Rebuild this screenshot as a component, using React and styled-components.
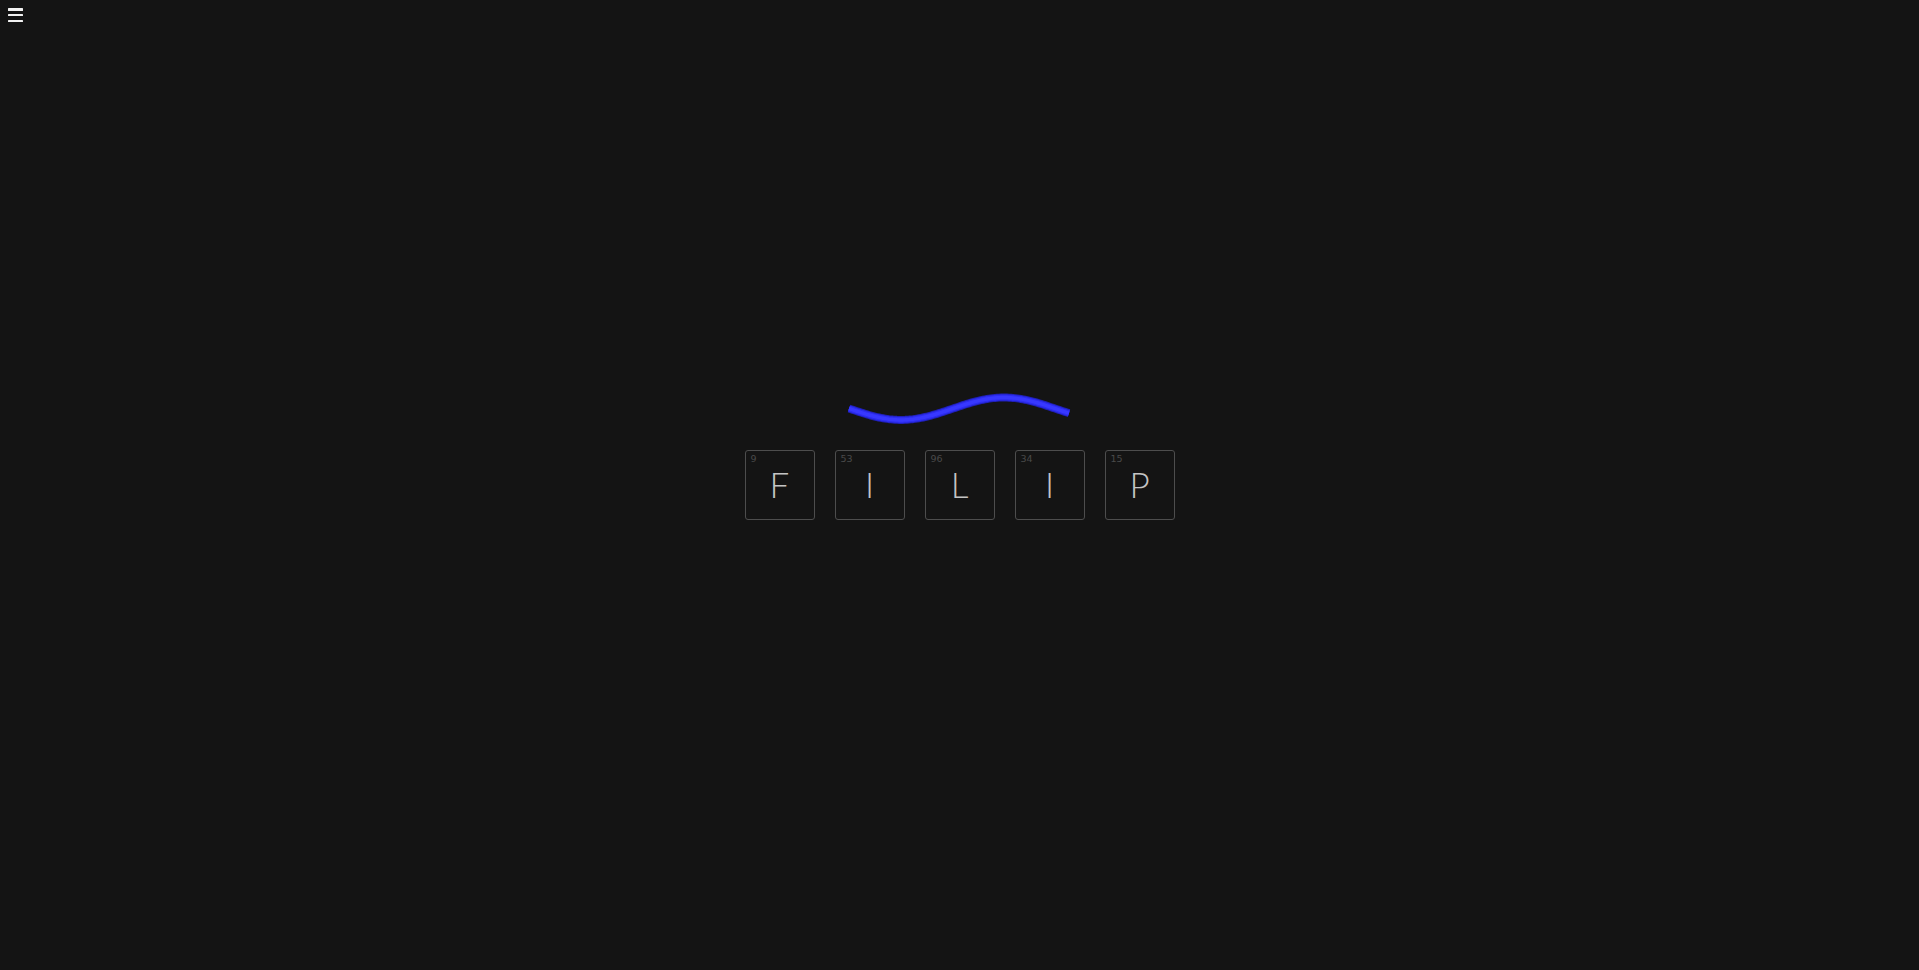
import React from 'react';
import styled, { createGlobalStyle } from 'styled-components';

const GlobalStyle = createGlobalStyle`
  html, body {
    margin: 0;
    padding: 0;
    background: #141414;
    height: 100%;
  }
  body {
    font-family: "Lato", "Open Sans", "Liberation Sans", sans-serif;
  }
`;

const Page = styled.div`
  width: 100vw;
  height: 100vh;
  display: flex;
  align-items: center;
  justify-content: center;
  overflow: hidden;
`;

const MenuButton = styled.button`
  position: fixed;
  top: 7px;
  left: 6px;
  width: 18px;
  height: 16px;
  border: none;
  background: transparent;
  display: flex;
  flex-direction: column;
  justify-content: space-between;
  align-items: center;
  cursor: pointer;
  padding: 1px 0;
  box-sizing: border-box;
`;

const Bar = styled.span`
  display: block;
  width: 15px;
  height: 2.5px;
  background: #f2f2f2;
  border-radius: 0.5px;
`;

const Stage = styled.div`
  display: flex;
  flex-direction: column;
  align-items: center;
  gap: 22px;
  padding-bottom: 62px;
`;

const WaveSvg = styled.svg`
  display: block;
  width: 228px;
  height: 40px;
`;

const Tiles = styled.div`
  display: flex;
  gap: 20px;
`;

const Tile = styled.div`
  position: relative;
  width: 70px;
  height: 70px;
  box-sizing: border-box;
  border: 1px solid #4d4d4d;
  border-radius: 3px;
  display: flex;
  align-items: center;
  justify-content: center;
  padding-bottom: 2px;
`;

const Number = styled.span`
  position: absolute;
  top: 2px;
  left: 5px;
  font-family: "DejaVu Sans", "Liberation Sans", sans-serif;
  font-size: 9.5px;
  color: #4a4a4a;
`;

const Letter = styled.span`
  font-size: 35px;
  font-weight: 300;
  color: #c4c4c4;
  line-height: 1;
`;

const tiles = [
  { n: 9, l: 'F' },
  { n: 53, l: 'I' },
  { n: 96, l: 'L' },
  { n: 34, l: 'I' },
  { n: 15, l: 'P' },
];

// the wave is one sine period, drawn between x=3 and x=224 of the box
const wavePath = () => {
  const pts = [];
  for (let x = 3; x <= 224; x += 2) {
    const y = 20.7 + 11.2 * Math.sin((2 * Math.PI * (x - 55)) / 206 + Math.PI / 2);
    pts.push(`${x},${y.toFixed(2)}`);
  }
  return 'M' + pts.join(' L');
};

const Wave = () => {
  const d = wavePath();
  return (
    <WaveSvg viewBox="0 0 228 40">
      <path d={d} fill="none" stroke="#2020b8" strokeWidth="8" strokeLinejoin="round" />
      <path d={d} fill="none" stroke="#2c2cf0" strokeWidth="6" strokeLinejoin="round" />
      <path d={d} fill="none" stroke="#3838ff" strokeWidth="3.5" strokeLinejoin="round" />
    </WaveSvg>
  );
};

export default function App() {
  return (
    <>
      <GlobalStyle />
      <MenuButton aria-label="menu">
        <Bar />
        <Bar />
        <Bar />
      </MenuButton>
      <Page>
        <Stage>
          <Wave />
          <Tiles>
            {tiles.map((t, i) => (
              <Tile key={i}>
                <Number>{t.n}</Number>
                <Letter>{t.l}</Letter>
              </Tile>
            ))}
          </Tiles>
        </Stage>
      </Page>
    </>
  );
}
